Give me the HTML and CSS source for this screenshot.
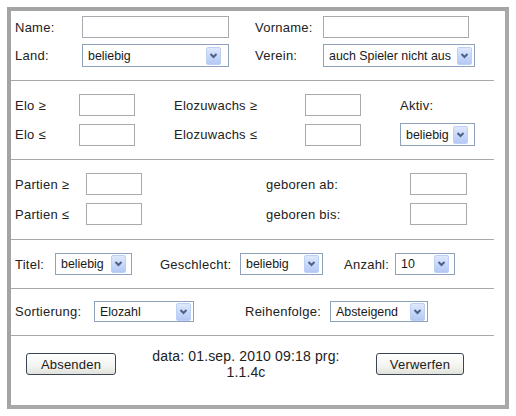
FILE: index.html
```html
<!DOCTYPE html>
<html lang="de">
<head>
<meta charset="utf-8">
<title>Spielersuche</title>
<link rel="stylesheet" href="styles.css">
</head>
<body>
<form class="frame">
  <div class="sec sec1">
    <span class="lbl">Name:</span><input class="inp w147" type="text">
    <span class="lbl">Vorname:</span><input class="inp w146" type="text">
    <span class="lbl">Land:</span>
    <div class="sel w147 h23 gap7"><span>beliebig</span><i class="arr"><svg viewBox="0 0 13 16" width="13" height="16"><path d="M3.5 6 L6.5 9 L9.5 6" /></svg></i></div>
    <span class="lbl">Verein:</span>
    <div class="sel w152 h23"><span>auch Spieler nicht aus</span><i class="arr"><svg viewBox="0 0 13 16" width="13" height="16"><path d="M3.5 6 L6.5 9 L9.5 6" /></svg></i></div>
  </div>

  <div class="sec sec2">
    <span class="lbl">Elo ≥</span><input class="inp w56" type="text">
    <span class="lbl">Elozuwachs ≥</span><input class="inp w56" type="text">
    <span class="lbl">Aktiv:</span>
    <span class="lbl">Elo ≤</span><input class="inp w56" type="text">
    <span class="lbl">Elozuwachs ≤</span><input class="inp w56" type="text">
    <div class="sel w75 h23 gap6"><span>beliebig</span><i class="arr"><svg viewBox="0 0 13 16" width="13" height="16"><path d="M3.5 6 L6.5 9 L9.5 6" /></svg></i></div>
  </div>

  <div class="sec sec3">
    <span class="lbl">Partien ≥</span><input class="inp w56" type="text">
    <span class="lbl">geboren ab:</span><input class="inp w57" type="text">
    <span class="lbl">Partien ≤</span><input class="inp w56" type="text">
    <span class="lbl">geboren bis:</span><input class="inp w57" type="text">
  </div>

  <div class="sec sec4">
    <span class="lbl">Titel:</span>
    <div class="sel w77 h22 gap5"><span>beliebig</span><i class="arr"><svg viewBox="0 0 13 16" width="13" height="16"><path d="M3.5 6 L6.5 9 L9.5 6" /></svg></i></div>
    <span class="lbl">Geschlecht:</span>
    <div class="sel w83 h22 gap3"><span>beliebig</span><i class="arr"><svg viewBox="0 0 13 16" width="13" height="16"><path d="M3.5 6 L6.5 9 L9.5 6" /></svg></i></div>
    <span class="lbl">Anzahl:</span>
    <div class="sel w60 h22 gap5"><span>10</span><i class="arr"><svg viewBox="0 0 13 16" width="13" height="16"><path d="M3.5 6 L6.5 9 L9.5 6" /></svg></i></div>
  </div>

  <div class="sec sec5">
    <span class="lbl">Sortierung:</span>
    <div class="sel w100 h21"><span>Elozahl</span><i class="arr"><svg viewBox="0 0 13 16" width="13" height="16"><path d="M3.5 6 L6.5 9 L9.5 6" /></svg></i></div>
    <span class="lbl">Reihenfolge:</span>
    <div class="sel w98 h21"><span>Absteigend</span><i class="arr"><svg viewBox="0 0 13 16" width="13" height="16"><path d="M3.5 6 L6.5 9 L9.5 6" /></svg></i></div>
  </div>

  <div class="sec6">
    <button type="button" class="btn w90">Absenden</button>
    <p class="info">data: 01.sep. 2010 09:18 prg: 1.1.4c</p>
    <button type="button" class="btn w88">Verwerfen</button>
  </div>
</form>
</body>
</html>
```

FILE: styles.css
```css
* { box-sizing: border-box; }

body {
  margin: 7px;
  background: #ffffff;
  font-family: "Liberation Sans", Arial, sans-serif;
  font-size: 13px;
  color: #222222;
}

.frame {
  width: 502px;
  height: 402px;
  border: 4px solid #a9a9a9;
  border-top-color: #a4a4a4;
  border-left-color: #a4a4a4;
  padding: 0 11px 0 0;
  margin: 0;
  background: #ffffff;
}

.sec {
  display: grid;
  align-items: center;
  justify-items: start;
  padding-left: 4px;
  border-bottom: 1px solid #a8a8a8;
}

.sec1 {
  grid-template-columns: 67px 173px 68px auto;
  row-gap: 6px;
  padding-top: 5px;
  padding-bottom: 13px;
}

.sec2 {
  grid-template-columns: 64px 95px 131px 95px auto;
  row-gap: 7px;
  padding-top: 13px;
  padding-bottom: 13px;
}

.sec3 {
  grid-template-columns: 71px 180px 144px auto;
  row-gap: 8px;
  padding-top: 13px;
  padding-bottom: 14px;
}

.sec4 {
  grid-template-columns: 40px 105px 80px 104px 51px auto;
  padding-top: 13px;
  padding-bottom: 13px;
}

.sec5 {
  grid-template-columns: 79px 151px 85px auto;
  padding-top: 12px;
  padding-bottom: 13px;
}

.lbl {
  letter-spacing: 0.25px;
  white-space: nowrap;
}

.inp {
  height: 22px;
  margin: 0;
  padding: 0 3px;
  border: 1px solid #a7abb0;
  background: #ffffff;
  font: inherit;
}

.sel {
  display: flex;
  align-items: center;
  justify-content: space-between;
  border: 1px solid #8ea3bb;
  background: #ffffff;
  padding-left: 5px;
  padding-right: 2px;
  white-space: nowrap;
  font-size: 12.4px;
  color: #1a1a1a;
}

.h21 { height: 21px; }
.h22 { height: 22px; }
.h23 { height: 23px; }
.gap3 { padding-right: 3px; }
.gap5 { padding-right: 5px; }
.gap6 { padding-right: 6px; }
.gap7 { padding-right: 7px; }

.arr {
  display: block;
  flex: none;
  width: 15px;
  height: 18px;
  border: 1px solid #bccff5;
  border-radius: 2px;
  background: linear-gradient(#dfe8fc, #c6d7fa 55%, #b4c9f3);
}

.arr svg {
  display: block;
  width: 13px;
  height: 16px;
}

.arr path {
  fill: none;
  stroke: #4d6185;
  stroke-width: 2;
}

.w56 { width: 56px; }
.w57 { width: 57px; }
.w60 { width: 60px; }
.w75 { width: 75px; }
.w77 { width: 77px; }
.w83 { width: 83px; }
.w88 { width: 88px; }
.w90 { width: 90px; }
.w98 { width: 98px; }
.w100 { width: 100px; }
.w146 { width: 146px; }
.w147 { width: 147px; }
.w152 { width: 152px; }

.sec6 {
  display: grid;
  grid-template-columns: 90px 260px 88px;
  align-items: center;
  padding: 12px 0 0 15px;
  height: 44px;
}

.btn {
  height: 22px;
  margin: 0;
  padding: 0;
  border: 1px solid #3a4656;
  border-radius: 3px;
  background: linear-gradient(#ffffff, #f3f3f0 60%, #e2e2dc);
  font-family: "Liberation Sans", Arial, sans-serif;
  font-size: 13px;
  color: #1a1a1a;
  letter-spacing: 0.2px;
}

.info {
  margin: 0 auto;
  width: 192px;
  text-align: center;
  font-size: 14px;
  line-height: 16px;
  letter-spacing: 0.15px;
}
```
